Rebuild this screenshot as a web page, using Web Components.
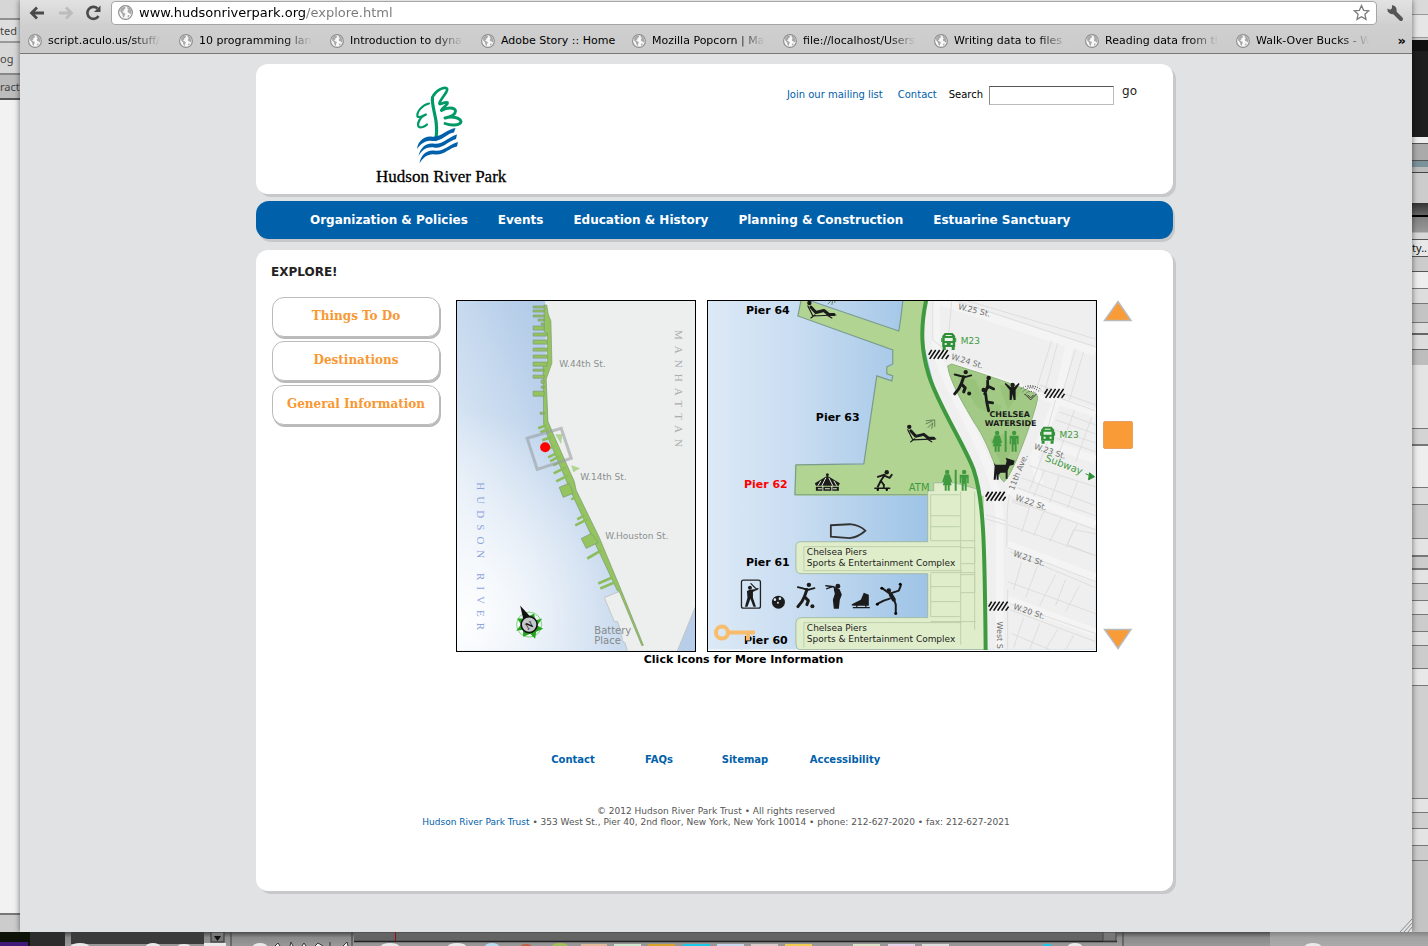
<!DOCTYPE html>
<html lang="en">
<head>
<meta charset="utf-8">
<title>Hudson River Park - Explore</title>
<style>
html,body{margin:0;min-height:100%}
body{font-family:"DejaVu Sans",Verdana,sans-serif;font-size:10px;color:#333;background:#b9b9b9}
</style>
</head>
<body>
<desk-top>
  <back-window slot="left" side="left"></back-window>
  <browser-window slot="main">
    <browser-bar slot="bar"></browser-bar>
    <site-card kind="head"><site-header></site-header></site-card>
    <site-card kind="nav"><site-nav></site-nav></site-card>
    <site-card kind="body"><explore-page></explore-page><site-footer></site-footer></site-card>
  </browser-window>
  <back-window slot="right" side="right"></back-window>
  <dock-strip slot="dock"></dock-strip>
</desk-top>

<script>
function define(name, html, setup) {
  const t = document.createElement('template');
  t.innerHTML = html;
  customElements.define(name, class extends HTMLElement {
    constructor() {
      super();
      this.attachShadow({mode: 'open'}).appendChild(t.content.cloneNode(true));
    }
    connectedCallback() { if (setup) setup(this.shadowRoot, this); }
  });
}

const GLOBE = `<svg viewBox="0 0 14 14" aria-hidden="true"><circle cx="7" cy="7" r="6.4" fill="#f8f8f8" stroke="#8c8c8c" stroke-width="1.1"/><path d="M3 2.8C4.4 1.7 6.3 1.6 7 2.2L6.6 3.7 5.2 4.4 5.4 5.6 4 6.2 5.6 7.4 7 8.2 6.2 9.8 5.6 12.2 4.4 10.6 4 8.4 2.2 6.4 2 4.6zM8.6 1.6L11 2.8 12.4 5.2 12.6 8 11.4 8.6 10.6 7.4 9.2 7 8.8 5.4 9.8 4.2 8.8 3.4zM9.4 9.4L11 9.8 9.8 11.4 8.8 11z" fill="#a9a9a9"/></svg>`;

define('desk-top', `
<style>
:host{display:grid;grid-template-columns:20px minmax(0,1fr) 16px;grid-template-rows:minmax(0,1fr) 14px;min-height:100vh}
.dock{grid-column:1/-1;display:grid;position:relative}
.side,.main{display:grid;min-width:0}
.main{position:relative}
</style>
<div class="side"><slot name="left"></slot></div>
<div class="main"><slot name="main"></slot></div>
<div class="side"><slot name="right"></slot></div>
<div class="dock"><slot name="dock"></slot></div>`);

define('back-window', `
<style>
:host{display:block;overflow:hidden;font:11px/16px "Noto Sans",sans-serif;color:#444;white-space:nowrap}
:host([side=left]){background:linear-gradient(#d6d6d6 0 18px,#8f8f8f 18px 20px,#dedede 20px 41px,#999 41px 43px,#d8d8d8 43px 73px,#888 73px 75px,#bcbcbc 75px 98px,#555 98px 100px,#f2f2f2 100px 913px,#777 913px 915px,#ccc 915px)}
:host([side=right]){background:linear-gradient(#dadada 0 14px,#999 14px 15px,#e6e6e6 15px 37px,#999 37px 38px,#ccc 38px 40px,#111 40px 51px,#1e1e1e 51px 137px,#eee 137px 143px,#555 143px 144px,#aaa 144px 160px,#555 160px 161px,#7b929b 161px 167px,#bbb 167px 172px,#444 172px 173px,#ccc 173px 203px,#333 203px,#666 215px,#000 215px 217px,#808080 217px,#999 232px,#d8d8d8 233px 239px,#555 239px 240px,#e8e8e8 240px 256px,#555 256px 257px,#ccc 257px 271px,#555 271px 272px,#eee 272px 288px,#777 288px 289px,#ddd 289px 303px,#777 303px 304px,#c4c4c4 304px 322px,#777 322px 323px,#ddd 323px 333px,#666 333px 335px,#ddd 335px 349px,#666 349px 350px,#bdbdbd 350px 365px,#e4e4e4 365px 428px,#777 428px 429px,#d4d4d4 429px 444px,#777 444px 446px,#eee 446px 487px,#777 487px 488px,#ddd 488px 504px,#777 504px 505px,#ccc 505px 538px,#777 538px 539px,#e4e4e4 539px 555px,#777 555px 557px,#ccc 557px 568px,#777 568px 570px,#e4e4e4 570px 583px,#777 583px 584px,#d0d0d0 584px 600px,#777 600px 601px,#e4e4e4 601px 614px,#777 614px 615px,#ccc 615px 631px,#777 631px 632px,#e0e0e0 632px 645px,#777 645px 646px,#ccc 646px 668px,#777 668px 669px,#e8e8e8 669px 685px,#777 685px 686px,#d0d0d0 686px 798px,#777 798px 799px,#e4e4e4 799px 812px,#777 812px 813px,#d0d0d0 813px 828px,#777 828px 829px,#e4e4e4 829px 845px,#777 845px 846px,#ccc 846px 860px,#777 860px 861px,#c4c4c4 861px)}
span{display:block}
span.first{padding-top:23px}
span.second{padding-top:12px}
span.third{padding-top:12px}
span.right{padding-top:240px;color:#111}
</style>`, (root, host) => {
  const rows = host.getAttribute('side') === 'left'
    ? [['first','ted'],['second','og'],['third','ract']] : [['right','ty..']];
  for (const [c, t] of rows) {
    const s = document.createElement('span');
    s.className = c; s.textContent = t; root.appendChild(s);
  }
});

define('browser-window', `
<style>
:host{display:flex;flex-direction:column;background:#e1e2e4;box-shadow:0 0 6px rgba(0,0,0,.55);position:relative}
.page{width:100%;max-width:920px;margin:0 auto;padding:10px 0 40px;box-sizing:border-box}
.grip{position:absolute;right:0;bottom:0;width:14px;height:14px}
</style>
<slot name="bar"></slot>
<main class="page"><slot></slot></main>
<svg class="grip" viewBox="0 0 14 14" aria-hidden="true"><path d="M2 14L14 1M6 14L14 5M10 14L14 9" stroke="#8a8a8a" fill="none"/></svg>`);

define('browser-bar', `
<style>
:host{display:block;background:linear-gradient(#e2e2e2,#cfcfcf 26px,#cbcbcb);border-bottom:1px solid #777;color:#000}
.row{display:flex;align-items:center;height:25px;padding:0 8px 0 7px}
button{border:0;background:none;padding:0;margin:0;display:block}
.nav{width:22px;height:20px;margin-right:6px}
.nav svg{display:block;width:22px;height:20px}
.url{flex:1;min-width:0;display:flex;align-items:center;height:24px;background:#fff;border:1px solid #a6a6a6;border-radius:4px;box-sizing:border-box;padding:0 6px}
.url>svg{width:15px;height:15px;flex:none}
input{flex:1;min-width:0;border:0;outline:0;padding:0;margin:0 0 0 6px;font:13px/18px "DejaVu Sans",sans-serif;background:linear-gradient(90deg,#000 167px,#777 167px);-webkit-background-clip:text;background-clip:text;-webkit-text-fill-color:transparent}
.star,.star svg{width:17px;height:17px;display:block}
.wrench,.wrench svg{width:18px;height:18px;display:block}
.wrench{margin-left:9px}
nav{display:flex;align-items:center;height:28px;box-sizing:border-box;padding:3px 6px 0 8px}
bookmark-link{flex:0 1 151px;min-width:0}
.more{margin-left:auto;font:bold 13px/14px "DejaVu Sans",sans-serif}
</style>
<div class="row">
  <button class="nav" aria-label="Back"><svg viewBox="0 0 22 20"><path d="M17 10H5M10 4.500L4.500 10l5.500 5.500" fill="none" stroke="#4a4a4a" stroke-width="2.800"/></svg></button>
  <button class="nav" aria-label="Forward"><svg viewBox="0 0 22 20"><path d="M4 10H16M11 4.500L16.500 10 11 15.500" fill="none" stroke="#bcbcbc" stroke-width="2.800"/></svg></button>
  <button class="nav" aria-label="Reload"><svg viewBox="0 0 22 20"><path d="M15.500 13A6 6 0 1 1 14.500 5.500" fill="none" stroke="#4a4a4a" stroke-width="2.600"/><path d="M17.500 2.500V9H11z" fill="#4a4a4a"/></svg></button>
  <div class="url">${GLOBE}<input aria-label="Address" value="www.hudsonriverpark.org/explore.html"><button class="star" aria-label="Bookmark this page"><svg viewBox="0 0 17 17"><path d="M8.500 1.500L10.600 6.300 15.800 6.800 11.900 10.300 13 15.400 8.500 12.800 4 15.400 5.100 10.300 1.200 6.800 6.400 6.300z" fill="#fff" stroke="#7b7b7b" stroke-width="1.300"/></svg></button></div>
  <button class="wrench" aria-label="Menu"><svg viewBox="0 0 18 18"><path d="M7 7L15 15" stroke="#555" stroke-width="4" stroke-linecap="round"/><path d="M1.500 4.500A5 5 0 0 0 9.500 9.200 5 5 0 0 0 6.200 1L5.800 4.600 4 5.800z" fill="#555"/></svg></button>
</div>
<nav aria-label="Bookmarks">
  <bookmark-link>script.aculo.us/stuff/</bookmark-link>
  <bookmark-link>10 programming lang</bookmark-link>
  <bookmark-link>Introduction to dynam</bookmark-link>
  <bookmark-link whole>Adobe Story :: Home</bookmark-link>
  <bookmark-link>Mozilla Popcorn | Mak</bookmark-link>
  <bookmark-link>file://localhost/Users</bookmark-link>
  <bookmark-link>Writing data to files i</bookmark-link>
  <bookmark-link>Reading data from the</bookmark-link>
  <bookmark-link>Walk-Over Bucks - W</bookmark-link>
  <button class="more" aria-label="More bookmarks">»</button>
</nav>`);

define('bookmark-link', `
<style>
:host{display:block}
a{display:flex;align-items:center;gap:6px;color:#000;text-decoration:none;font:11px/16px "DejaVu Sans",sans-serif;padding-right:18px}
svg{width:14px;height:14px;flex:none}
span{flex:1;overflow:hidden;white-space:nowrap;-webkit-mask-image:linear-gradient(90deg,#000 75%,transparent);mask-image:linear-gradient(90deg,#000 75%,transparent)}
:host([whole]) a{padding-right:8px}
:host([whole]) span{-webkit-mask-image:none;mask-image:none}
</style>
<a href="#">${GLOBE}<span><slot></slot></span></a>`);

define('site-card', `
<style>
:host{display:block;background:#fff;border-radius:12px;box-shadow:3px 3px 0 #c8c8ca;margin-right:3px}
:host([kind=nav]){background:#0060aa;margin-top:7px;border-radius:13px;box-shadow:2px 3px 0 #c8c8ca}
:host([kind=body]){margin-top:11px}
</style><slot></slot>`);

define('site-header', `
<style>
:host{display:flex;justify-content:space-between;align-items:flex-start;padding:20px 36px 8px 118px}
svg{width:134px;height:102px;display:block}
form{display:flex;align-items:center;gap:6px;margin:0;font-size:10px;line-height:14px;color:#000}
a{color:#0060aa;text-decoration:none;margin-right:9px}
a.last{margin-right:6px}
input{width:125px;height:19px;box-sizing:border-box;border:1px solid #bbb;border-top:1px solid #555;border-left-color:#888;padding:0 2px;font:10px "DejaVu Sans",sans-serif}
button{border:0;background:none;padding:0 0 8px;margin-left:2px;font:12px/14px "DejaVu Sans",sans-serif;color:#222}
</style>
<svg viewBox="374 84 134 102" role="img" aria-label="Hudson River Park">
  <g fill="none" stroke="#009a66" stroke-linecap="round" stroke-linejoin="round">
    <path d="M432.500 98C431.500 102 434.500 112 436 121 436.800 128 437 135 435.500 139.500" stroke-width="3.200"/>
    <path d="M432.500 97C436 90 444 86.500 447 88.500 449 91 441 98 439.500 103 438.500 106 444 101.500 447.500 102.500 448 105 443 107 441.500 110" stroke-width="2.700"/>
    <path d="M441.500 110.500C447 107 455 107 455.500 111 455.500 114.500 450 117 445 118 452 116 460 117.500 461 121.500 460.500 126 450 125.500 445 123.500" stroke-width="2.900"/>
    <path d="M429 103.500C422 105 416.500 112 417.500 116.500 419 118.500 424 115 426 114.500 420 117 417 123 418.500 126.500 420.500 128.500 425 126.500 427 124.500" stroke-width="2.200"/>
  </g>
  <g fill="#0060aa">
    <path d="M417 149C418 141 424 136 431 136.500 441 138 446 129.500 455.500 128L454 132.500C447 133 442 142 432 141 425 140 421 144 417 149z"/>
    <path d="M418.500 156C420 148 426 142.500 433 143.500 442 145.500 448 137 457 134.500L456 139C448 141 443 149 434 147.500 427 146.500 422 150 418.500 156z"/>
    <path d="M419.500 163.500C420.500 155 427 149.500 434 150.500 443 152.500 449 144.500 458 142L457 146.500C449 148 444 155.500 435 154.500 428 153.500 423 157.500 419.500 163.500z"/>
  </g>
  <text x="376" y="182" font-family="Liberation Serif,Times New Roman,serif" font-size="17" fill="#000" stroke="#000" stroke-width=".3">Hudson River Park</text>
</svg>
<form onsubmit="return false">
  <a href="#">Join our mailing list</a><a class="last" href="#">Contact</a>
  <label for="q">Search</label><input id="q" type="text"><button>go</button>
</form>`);

define('site-nav', `
<style>
:host{display:block}
nav{display:flex;gap:30px;padding:10px 20px 10px 54px;font:bold 12px/18px "DejaVu Sans",Verdana,sans-serif}
a{color:#fff;text-decoration:none;white-space:nowrap}
</style>
<nav><a href="#">Organization &amp; Policies</a><a href="#">Events</a><a href="#">Education &amp; History</a><a href="#">Planning &amp; Construction</a><a href="#">Estuarine Sanctuary</a></nav>`);

define('menu-button', `
<style>
:host{display:block}
button{display:block;width:168px;height:40px;box-sizing:border-box;border:1px solid #bbb;border-radius:12px;background:#fff;box-shadow:1px 2px 0 #b9babc;color:#f89833;font:bold 12px/14px "DejaVu Serif",serif;padding:0 0 2px}
</style><button><slot></slot></button>`);

define('explore-page', `
<style>
:host{display:block;padding:14px 40px 0 15px}
h1{font:bold 12px/16px "DejaVu Sans",Verdana,sans-serif;margin:0 0 17px;color:#222}
.cols{display:flex;align-items:flex-start}
.menu{display:flex;flex-direction:column;gap:4px;width:169px;flex:none;padding-left:1px}
.show{flex:1;min-width:0;margin:3px 0 0 15px}
.maps{display:flex}
river-map{flex:240 1 0;min-width:0}
pier-map{flex:390 1 0;min-width:0;margin-left:11px}
map-scroll{flex:none;margin-left:6px}
.caption{font:bold 11px/14px "DejaVu Sans",Verdana,sans-serif;color:#000;text-align:center;margin:1px 102px 0 0}
</style>
<h1>EXPLORE!</h1>
<div class="cols">
  <div class="menu"><menu-button>Things To Do</menu-button><menu-button>Destinations</menu-button><menu-button>General Information</menu-button></div>
  <div class="show">
    <div class="maps"><river-map></river-map><pier-map></pier-map><map-scroll></map-scroll></div>
    <div class="caption">Click Icons for More Information</div>
  </div>
</div>`);

define('map-scroll', `
<style>
:host{display:flex;flex-direction:column;width:30px}
button{display:block;border:0;padding:0;background:none}
svg{display:block;width:30px;height:22px}
.home{width:30px;height:28px;background:#f99b36;border:1px solid #e6a062;border-radius:2px;margin-top:99px}
.down{margin:auto 0 2px}
</style>
<button aria-label="Move up"><svg viewBox="0 0 30 22"><path d="M15 1.500L28 20.500H1.500z" fill="#f99b36" stroke="#b9babc" stroke-width="1.500"/></svg></button>
<button class="home" aria-label="Centre map"></button>
<button class="down" aria-label="Move down"><svg viewBox="0 0 30 22"><path d="M15 20.500L28 1.500H1.500z" fill="#f99b36" stroke="#b9babc" stroke-width="1.500"/></svg></button>`);

define('river-map', `
<style>
:host{display:block;border:1px solid #000;box-sizing:border-box}
svg{display:block;width:100%;height:auto}
text{font-family:"DejaVu Sans",Verdana,sans-serif}
.serif{font-family:"Liberation Serif",serif;letter-spacing:6px}
</style>
<svg viewBox="457 301 238 349" role="img" aria-label="Park overview map">
  <defs><linearGradient id="w" gradientUnits="userSpaceOnUse" x1="580" y1="301" x2="400" y2="380"><stop offset="0" stop-color="#a7c4e4"/><stop offset=".35" stop-color="#b9d0ea"/><stop offset=".7" stop-color="#cfdff1"/><stop offset="1" stop-color="#e4edf7"/></linearGradient>
  <linearGradient id="w2" gradientUnits="userSpaceOnUse" x1="560" y1="420" x2="640" y2="600"><stop offset="0" stop-color="#b4cce8" stop-opacity="0"/><stop offset="1" stop-color="#b4cce8" stop-opacity=".6"/></linearGradient>
  <radialGradient id="w3" gradientUnits="userSpaceOnUse" cx="457" cy="620" r="210"><stop offset="0" stop-color="#fff"/><stop offset=".3" stop-color="#fff" stop-opacity=".75"/><stop offset="1" stop-color="#fff" stop-opacity="0"/></radialGradient></defs>
  <rect x="457" y="301" width="238" height="349" fill="url(#w)"/>
  <rect x="457" y="301" width="238" height="349" fill="url(#w2)"/>
  <rect x="457" y="301" width="238" height="349" fill="url(#w3)"/>
  <path d="M545 301H695V606L677 650H627L625 643 622 640 621 631 617 621 614 621 604 597 619 591 576 490 548 421 546 379z" fill="#edefee"/>
  <path d="M695 606L677 650H695z" fill="#b7cde8"/>
  <path d="M604 597L619 591M604 597L614 621 617 621 621 631 622 640 625 643 627 650M695 606L677 650" fill="none" stroke="#c4c7c8"/>
  <g stroke="#7f9a72" stroke-width=".7" fill="#93c45f">
    <path d="M544 305H546.500L548 314 550.700 321 551.700 363 546 379 547.700 421 552.700 433 574 481 576 490 599 537 621 590 643 644.500 641.500 645 619 591 617 590 584 520 571 492 549 440 543.500 424 543 366 547 362 547 334 544 331z"/>
    <path d="M533 306h11v2h-11zM533 310h11v2h-11zM533 315h11v2h-11zM538 319h6v2h-6zM541 323h3v2h-3zM533 326h11v4h-11zM533 333h14v3h-14zM533 340h14v4h-14zM533 348h14v3h-14zM533 355h14v3h-14zM533 362h14v4h-14zM533 369h11v2h-11zM533 375h11v3h-11zM541 380h3v3h-3zM541 386h3v2h-3zM533 391h11v5h-11zM540 412h4v2h-4z"/>
    <path d="M559 487L569 483 573 493 563 497zM581 538L591 533 598 542 586 548z"/>
  </g>
  <g stroke="#8cbd5a" stroke-width="2.600" fill="none"><path d="M538 428l8-3M540 432l8-3M542 440l9-3M546 449l8-3M548 457l8-4M550 461l9-5M553 465l8-4M553.500 473l12-6M556 481l12-6M571 499l4-2M577 519l7-4M575 525l12-6M587 558l14-8M598 583l14-6M600 588l14-6"/></g>
  <path d="M555 434h7l-1 10zM571 465l9 3-7 4z" fill="#b0d493"/>
  <path d="M527 438L561 428 571 458 537 469z" fill="none" stroke="#9a9fa3" stroke-opacity=".6" stroke-width="3"/>
  <circle cx="545" cy="447" r="5" fill="#f00"/>
  <g fill="#8c908f" font-size="9"><text x="559" y="367">W.44th St.</text><text x="580" y="480">W.14th St.</text><text x="605" y="539">W.Houston St.</text></g>
  <g fill="#85888a" font-size="10"><text x="594" y="633">Battery</text><text x="594" y="643">Place</text></g>
  <text class="serif" transform="translate(675 330) rotate(90)" font-size="11" fill="#a9adb0">MANHATTAN</text>
  <text class="serif" transform="translate(477 482) rotate(90)" font-size="11" fill="#8ba4dc">HUDSON RIVER</text>
  <g transform="translate(529 624)">
    <circle r="12.500" fill="none" stroke="#62cf55" stroke-width=".8"/>
    <path d="M5-11L6-4 13-6 8 1 14 4 7 7 6 14 1 9-6 12-6 5-13 6-8 0-12-6-5-6z" fill="#23a31a"/>
    <path d="M-9-19L1-8-6-6z" fill="#111"/>
    <circle r="8" fill="#c5c8ca" stroke="#111" stroke-width="1.600"/>
    <text transform="rotate(-30)" x="-4" y="4" font-size="10" style="font-family:'Liberation Serif',serif" font-weight="bold" fill="#111">N</text>
  </g>
</svg>`);

define('pier-map', `
<style>
:host{display:block;border:1px solid #000;box-sizing:border-box}
svg{display:block;width:100%;height:auto}
text{font-family:"DejaVu Sans",Verdana,sans-serif}
.ln{fill:none;stroke-linecap:round;stroke-linejoin:round}
</style>
<svg viewBox="708 301 388 349" role="img" aria-label="Detail map of piers 60 to 64">
  <defs>
    <linearGradient id="a" gradientUnits="userSpaceOnUse" x1="708" y1="0" x2="930" y2="0"><stop offset="0" stop-color="#dce9f6"/><stop offset=".4" stop-color="#c9ddf1"/><stop offset="1" stop-color="#9dc3e6"/></linearGradient>
    <g id="lounge"><circle cx="2.500" cy="3" r="2.200" fill="#1b1b1b"/><path class="ln" d="M4 7L9 12.500 17 10.500 22 14.500 27 14.500" stroke="#1b1b1b" stroke-width="3"/><path class="ln" d="M1 6L6 16 29 15M20 15l5 3M8 15l-4 3" stroke="#1b1b1b" stroke-width="1.200"/><path d="M19-3l9-1M19 0l7-3M21 4l5-5M25 5l1-6M28-4v7" stroke="#4f6b45" stroke-width=".8" fill="none"/></g>
    <g id="wc" fill="#3f9a3f"><circle cx="4.500" cy="2.200" r="2.200"/><path d="M2 4.500h5L9.500 12 8 12.500 6.500 9 9 15.500H7v5.500H5v-5.500H4V21H2v-5.500H0L2.500 9 1 12.500-.5 12z"/><path d="M12 0h2v21h-2z"/><circle cx="21.500" cy="2.200" r="2.200"/><path d="M17 5h9v8.500h-1.500V8H24v13h-2v-7h-1v7h-2V8h-.5v5.500H17z"/></g>
    <g id="bus"><path d="M3 0h8l2.500 3v11H.5V3z" fill="#2f9038"/><path d="M4 2h6v1H4zM3 5h8v3H3zM3 10h2v2H3zM9 10h2v2H9z" fill="#e8f1e6"/><path d="M1 14h3v3H1zM10 14h3v3h-3zM-.5 5h1v4h-1zM13.500 5h1v4h-1z" fill="#2f9038"/></g>
    <path id="hatch" d="M0 5L3 0M1 9L7 0M5 9L11 0M9 9L15 0M13 9L19 0M17 9L20 5" stroke="#111" stroke-width="1.600" fill="none"/>
    <g id="kick"><circle cx="12" cy="2.200" r="2.200" fill="#1b1b1b"/><path class="ln" d="M1 4.500L7 6 12 7 17.500 5.500" stroke="#1b1b1b" stroke-width="2"/><path class="ln" d="M10 7L7.500 14 11.500 18 10 22M7.500 14L5 19 1 24" stroke="#1b1b1b" stroke-width="3"/><circle cx="15.500" cy="23.500" r="2" fill="#1b1b1b"/></g>
  </defs>
  <rect x="708" y="301" width="388" height="349" fill="url(#a)"/>
  <path d="M926 301H1096V650H986L985 570 978 484 937 396 923 340z" fill="#efefef"/>
  <g fill="none" stroke="#f4f4f4" stroke-width="8"><path d="M1040 484L1034 458 1058 400 1070 345M936 301V345C940 385 1000 460 1000 520V650M950 365L1096 413M1040 440L1096 460M1008 490L1096 525M1008 545L1096 578M1008 600L1096 633M940 301L1096 352"/></g>
  <g fill="none" stroke="#d9d9d9" stroke-width=".8">
    <path d="M933 301V340L943 348M952 301L948 345M957 301L1096 347M968 301L1096 339M1052 341L1036 392M1058 343L1044 396M1076 349L1062 396M1084 352L1070 400M1040 385L1096 405M1038 390L1096 411M1056 400L1046 436M1060 412L1096 425M1056 420L1096 434M1052 429L1096 443M1050 436L1096 452M1048 442L1030 490M1075 410L1060 452M1092 418L1076 462M1030 466L1096 487M1022 478L1096 506M1018 488L1096 516M1012 500L1096 530M1045 470L1034 497M1060 475L1050 503M1078 482L1068 508"/>
    <path d="M1010 495C1006 510 1008 530 1007 548M1012 502L1030 508 1022 532M1044 512L1034 536M1062 518L1050 542M1078 524L1066 548M1096 534L1074 530 1068 545 1096 556M1008 525L1096 556M1008 548L1096 582M1010 552L1096 588M1022 562L1014 590M1038 566L1026 598M1056 575L1040 606M1066 580L1056 606M1080 586L1066 612M1008 582L1096 614M1010 604L1096 634M1010 610L1096 642M1024 618L1014 648M1040 624L1030 650M1058 630L1046 650M1074 636L1066 650M1008 590V650M1012 634L1050 650M986 515L1006 521M986 519L1006 525"/>
  </g>
  <path d="M808 301H808L899 331 904 301H926L923 316V340L927 366 937 396 957 436 972 463 984 523V496H795V465H864L877 376 891 381 893 376 887 374V367L893 366V350L798 316 801 301z" fill="#b1d493"/>
  <path d="M811 301L899 331Q901 320 903 301M801 301L798 316 893 350 893 364 887 367V374L893 376 892 381 877 376 864 464 796 465 795 495H928" fill="none" stroke="#7b9c8c" stroke-width="1.200"/>
  <path d="M928 491H934V483H955L980 490 985 570 986 650H800Q796 650 796 642V624Q796 618 802 618H928V574H801Q796 574 796 568V547Q796 542 801 542H928z" fill="#e0edcb" stroke="#97b29a" stroke-width=".8"/>
  <g fill="none" stroke="#bdd0ab"><path d="M962 547H804V571H962M962 623H804V648M931 495h29M931 516h29M931 527h29M931 541h44M931 573h45M931 587h29M931 602h29M931 617h29M931 622h45M961 492V645M975 492V630M961 548h14v16h-14M961 575h14v18h-14M931 495V541M931 574V617"/></g>
  <path d="M952 364C960 367 1030 388 1038 396 1040 402 1012 480 1004 482 998 478 990 445 976 425 964 405 950 382 948 366z" fill="#a2c985" stroke="#8db478"/>
  <g fill="#8fbe70"><path d="M956 374l20 6 8 20 18 6-4 10-20-8zM1000 385l22 5-14 20zM990 440l14-6 8 12-8 24z" opacity=".5"/></g>
  <path d="M926.500 300C920 330 922 352 929 375 938 405 965 445 974 470 984 500 985 540 986 651" fill="none" stroke="#3f9a3f" stroke-width="4"/>

  <use href="#lounge" x="907" y="424"/><use href="#lounge" x="807" y="300"/>
  <use href="#wc" x="943" y="470"/><use href="#wc" x="993" y="431"/>
  <use href="#bus" x="942" y="333"/><use href="#bus" x="1041" y="427"/>
  <use href="#hatch" x="929" y="350"/><use href="#hatch" x="1045" y="389"/><use href="#hatch" x="986" y="492"/><use href="#hatch" x="989" y="602"/>
  <use href="#kick" x="954" y="370"/><use href="#kick" x="797" y="583"/>
  <g fill="#1b1b1b">
    <circle cx="989" cy="378" r="2.200"/><circle cx="984" cy="390" r="2.200"/><circle cx="1013" cy="385" r="2.200"/>
    <path d="M1006 383l5 4h4l4-4 1 1-4 6v10h-2l-1-6-1 6h-2v-10l-5-6z"/>
    <path class="ln" d="M988 381v7M985 394l3-8 6 3M986 394l1 8 6 1M987 402l2 9" stroke="#1b1b1b" stroke-width="2.800"/>
    <path d="M995 466l-1-3 2 2 10 0 1-4-1-3 9 3-1 4-4 1-2 5v8h-2v-6h-5l-2 2v5h-2v-6l-1 6h-2z"/>
  </g>
  <g fill="none" stroke="#333" stroke-dasharray="1 1.500" stroke-width="1"><path d="M1021 389Q1031 382 1042 390M1023 392Q1031 384 1040 392M1025 395Q1031 388 1038 395M1028 387h8"/><path d="M1025 394L1031 400 1037 394M1028 395L1031 398 1034 395" stroke-dasharray="none"/></g>

  <g fill="#1b1b1b"><circle cx="827.500" cy="475" r="1.500"/><path d="M827.500 476L840 483.500 839 486H816L815 483.500z"/><path d="M816 487h23v4h-23z"/></g>
  <g stroke="#dfeecf" stroke-width="1" fill="none"><path d="M826 478l-4 8M829 478l4 8M821 481l-3 5M834 481l3 5M818 489h4M825 489h5M833 489h4M823 486v5M832 486v5"/></g>
  <g><circle cx="887" cy="472.500" r="2.200" fill="#1b1b1b"/><path class="ln" d="M885 475L881 481 884 485M881 481L878 487M885 476L890 478 892 475M884 475L878 477" stroke="#1b1b1b" stroke-width="1.900"/><path class="ln" d="M875 488.500h15" stroke="#1b1b1b" stroke-width="1.300"/><circle cx="878" cy="490" r="1.200"/><circle cx="887" cy="490" r="1.200"/><path class="ln" d="M884 485v3" stroke="#1b1b1b" stroke-width="1.800"/></g>
  <path d="M831 525.500L850 524.500Q860 525.500 865.500 531 859 537 850 538.500L831 537z" fill="none" stroke="#333" stroke-width="1.800"/>
  <rect x="741.500" y="580.500" width="19" height="28" rx="2" fill="none" stroke="#222" stroke-width="1.300"/>
  <circle cx="750" cy="588" r="2" fill="#1b1b1b"/><path d="M747 591h6v7l3 9h-2.500l-3-8-3 8H745l2.500-9z" fill="#1b1b1b"/><path class="ln" d="M749 591l7-1M757 590l-6-6M752 592l6-3" stroke="#1b1b1b" stroke-width="1.300"/>
  <circle cx="778.500" cy="602.500" r="6.500" fill="#1b1b1b"/><circle cx="775" cy="600" r="1.300" fill="#dce8f4"/><circle cx="780" cy="599" r="1.300" fill="#dce8f4"/><circle cx="778" cy="603" r="1" fill="#dce8f4"/>
  <circle cx="838" cy="586.500" r="2.400" fill="#1b1b1b"/><path d="M834 588l6 2 2 5-2 5-1 9h-5l-1-9 2-6-1-4z" fill="#1b1b1b"/><path class="ln" d="M839 590l-6-3-6 2M834 587l-8-1" stroke="#1b1b1b" stroke-width="1.500"/>
  <path d="M864 593l5 2v11h-15q-4 0-1-2l8-4zM853 608.500h17v-1.200h-17z" fill="#1b1b1b"/><path d="M857 605v3M866 605v3" stroke="#1b1b1b" stroke-width="1.200"/>
  <circle cx="889" cy="591" r="2.300" fill="#1b1b1b"/><path class="ln" d="M883 589l7 5 9-3 2-5M894 599l2 6v8M890 599l-6 2-6 3" stroke="#1b1b1b" stroke-width="2"/><path class="ln" d="M891 595l3 5" stroke="#1b1b1b" stroke-width="4"/><circle cx="900.500" cy="584.500" r="1.500"/><circle cx="882" cy="588.500" r="1.500"/><circle cx="877.500" cy="604.500" r="1.500"/><circle cx="896" cy="614" r="1.500"/>

  <g font-size="11" font-weight="bold"><text x="746" y="314">Pier 64</text><text x="816" y="421">Pier 63</text><text x="744" y="488" fill="#f00">Pier 62</text><text x="746" y="566">Pier 61</text><text x="744" y="644">Pier 60</text></g>
  <g fill="none" stroke="#f7bd6c"><circle cx="722" cy="633" r="6" stroke-width="4"/><path d="M728 633H755M748 634V641" stroke-width="4"/></g>
  <g font-size="9" fill="#222"><text x="807" y="555">Chelsea Piers</text><text x="807" y="566">Sports &amp; Entertainment Complex</text><text x="807" y="631">Chelsea Piers</text><text x="807" y="642">Sports &amp; Entertainment Complex</text></g>
  <g font-size="8" font-weight="bold" fill="#1b1b1b" text-anchor="middle"><text x="1010" y="417">CHELSEA</text><text x="1011" y="426">WATERSIDE</text></g>
  <g fill="#3f9a3f" font-size="9"><text x="961" y="344">M23</text><text x="1060" y="438">M23</text><text x="909" y="491" font-size="10">ATM</text><text transform="translate(1045 461) rotate(21)" font-size="10">Subway</text></g>
  <path d="M1086 474l5 2M1090 473l5 4-6 3z" stroke="#2f9038" stroke-width="1" fill="#2f9038"/>
  <g fill="#707070" font-size="8"><text transform="translate(951 359) rotate(17)">W.24 St.</text><text transform="translate(958 309) rotate(14)">W.25 St.</text><text transform="translate(1034 449) rotate(18)">W.23 St.</text><text transform="translate(1015 500) rotate(19)">W.22 St.</text><text transform="translate(1013 556) rotate(19)">W.21 St.</text><text transform="translate(1013 609) rotate(19)">W.20 St.</text><text transform="translate(1014 491) rotate(-68)">11th Ave.</text><text transform="translate(997 622) rotate(90)">West S</text></g>
</svg>`);

define('site-footer', `
<style>
:host{display:block;padding:86px 0 63px;color:#555}
nav{display:grid;grid-template-columns:86px 86px 86px 114px;justify-content:center;text-align:center;font:bold 10px/14px "DejaVu Sans",Verdana,sans-serif;padding-left:3px}
a{color:#0060aa;text-decoration:none}
p{margin:39px 0 0;padding-left:3px;text-align:center;font:9px/11px "DejaVu Sans",Verdana,sans-serif}
</style>
<nav><span><a href="#">Contact</a></span><span><a href="#">FAQs</a></span><span><a href="#">Sitemap</a></span><span><a href="#">Accessibility</a></span></nav>
<p>© 2012 Hudson River Park Trust • All rights reserved<br><a href="#">Hudson River Park Trust</a> • 353 West St., Pier 40, 2nd floor, New York, New York 10014 • phone: 212-627-2020 • fax: 212-627-2021</p>`);

define('dock-strip', `
<style>
:host{display:block;height:14px;overflow:hidden;background:linear-gradient(#555,#8c8c8c)}
svg{display:block;width:100%;height:14px}
</style>
<svg viewBox="0 0 1428 14" preserveAspectRatio="none" aria-hidden="true">
  <defs><linearGradient id="g" x1="0" y1="0" x2="0" y2="1"><stop offset="0" stop-color="#4d4d4d"/><stop offset=".4" stop-color="#8a8a8a"/><stop offset="1" stop-color="#999"/></linearGradient></defs>
  <rect width="1428" height="14" fill="url(#g)"/>
  <rect x="1270" width="158" height="14" fill="#bbb" opacity=".5"/>
  <rect width="30" height="14" fill="#0d1407"/><rect y="10" width="28" height="4" fill="#3f1a78"/>
  <rect x="30" width="35" height="14" fill="#2c2c2c"/><rect x="71" width="133" height="12" fill="#3b3b3b"/>
  <rect x="211" width="13" height="10" fill="#777" stroke="#333"/><path d="M214 4h7l-3.500 5z" fill="#111"/>
  <path d="M231 0V14M352 0V14M1123 0V14" stroke="#3a3a3a"/><rect x="354" y="1" width="762" height="8" fill="#646464"/><path d="M354 9.500H1117" stroke="#222" stroke-width="1.500"/><path d="M395.500 0V9" stroke="#8c1010"/>
  <g fill="#e9e9e9"><ellipse cx="80" cy="14" rx="9" ry="3"/><ellipse cx="153" cy="14" rx="7" ry="3"/><ellipse cx="184" cy="14" rx="6" ry="2"/><rect x="204" y="11" width="22" height="3"/><ellipse cx="260" cy="14" rx="7" ry="3"/><ellipse cx="390" cy="14" rx="9" ry="3"/><ellipse cx="457" cy="14" rx="9" ry="3"/><ellipse cx="1075" cy="14" rx="7" ry="3"/><ellipse cx="1313" cy="14" rx="8" ry="3"/></g>
  <path d="M275 14l3-3 2 3M290 14l1-4 2 4M302 14l2-3 2 3M315 14l3-3 5 3M330 14v-4M343 14l4-4 1 4" stroke="#333" fill="#eee"/>
  <ellipse cx="492" cy="14" rx="7" ry="3" fill="#b6dcf1"/><ellipse cx="526" cy="14" rx="5" ry="2" fill="#c06042"/><ellipse cx="560" cy="14" rx="8" ry="3" fill="#9fc05a"/>
  <path d="M581 12h26v2h-26z" fill="#e0b99a"/><path d="M614 12h27v2h-27z" fill="#cfe6cf"/><path d="M648 12h27v2h-27z" fill="#d6a42c"/><path d="M683 12h27v2h-27z" fill="#1cc8e8"/><path d="M717 12h27v2h-27z" fill="#c8d6ee"/><path d="M751 12h27v2h-27z" fill="#dccaca"/><path d="M785 12h27v2h-27z" fill="#f0cc50"/><path d="M853 12h27v2h-27z" fill="#dde2cb"/><path d="M888 12h27v2h-27z" fill="#e6d3ea"/><path d="M922 12h27v2h-27z" fill="#ddd"/><path d="M1043 12h8v2h-8z" fill="#1cc8e8"/>
  <path d="M1103 0h13v9h-13z" fill="#777" stroke="#444"/>
</svg>`);
</script>
</body>
</html>
